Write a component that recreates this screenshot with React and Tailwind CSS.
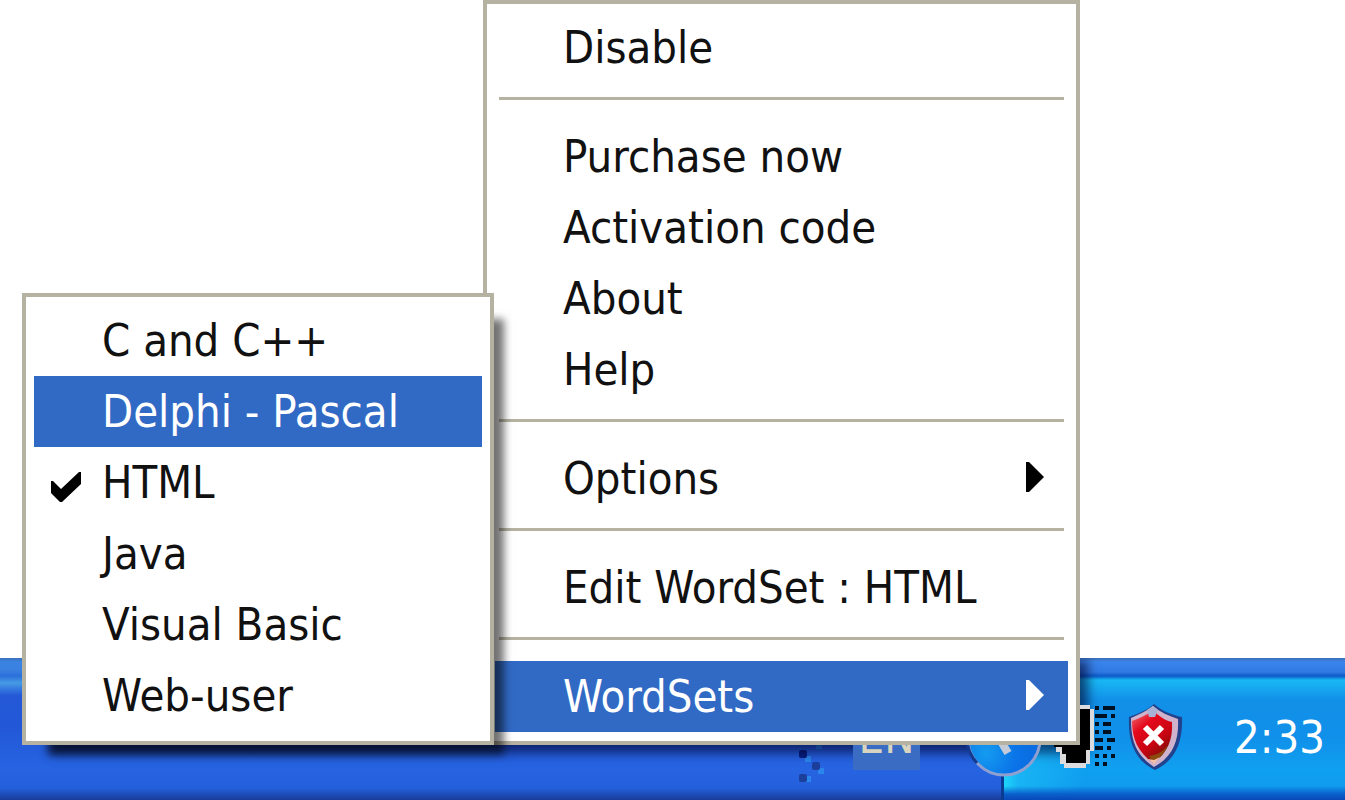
import React from "react";

const wordSets = [
  { label: "C and C++" },
  { label: "Delphi - Pascal", active: true },
  { label: "HTML", checked: true },
  { label: "Java" },
  { label: "Visual Basic" },
  { label: "Web-user" },
];

const menuGroups = [
  [{ label: "Disable" }],
  [
    { label: "Purchase now" },
    { label: "Activation code" },
    { label: "About" },
    { label: "Help" },
  ],
  [{ label: "Options", submenu: true }],
  [{ label: "Edit WordSet : HTML" }],
  [{ label: "WordSets", submenu: true, active: true }],
];

// One string per row of the signal icon, "#" is a lit pixel
const signalRows = ["#.###", "###.#", "#.##.", "#.##.", "##.##", "##.#.", "#.#.#", "#.#.."];

function CheckMark() {
  return (
    <svg viewBox="0 0 32 32" className="w-8 h-8 mt-2 mr-1 shrink-0 text-black" fill="currentColor">
      <path d="M1 10h2l8 8L29 1h2v12L12 31h-2L1 22z" />
    </svg>
  );
}

function MenuItem({ item }) {
  return (
    <button
      type="button"
      role={item.checked ? "menuitemcheckbox" : "menuitem"}
      aria-checked={item.checked}
      aria-haspopup={item.submenu ? "menu" : undefined}
      className={`flex items-center w-full h-[71px] pr-6 text-left whitespace-nowrap ${
        item.active ? "bg-[#316ac5] text-white" : "text-[#111]"
      }`}
    >
      <span className="flex justify-center w-17 shrink-0">
        {item.checked && <CheckMark />}
      </span>
      <span className="flex-1">{item.label}</span>
      {item.submenu && (
        <svg
          viewBox="0 0 18 32"
          className={`w-[18px] h-8 mb-1 ${item.active ? "text-white" : "text-black"}`}
          fill="currentColor"
        >
          <path d="M0 1h3l15 15L3 31H0z" />
        </svg>
      )}
    </button>
  );
}

/* -------------------------------------------
    TRAY ICONS
-------------------------------------------- */
function GripDots() {
  return (
    <svg viewBox="0 0 28 90" className="w-7 h-[90px]">
      <g fill="#2a86ec">
        <rect x="7" y="64" width="6" height="6" />
        <rect x="20" y="76" width="6" height="6" />
        <rect x="8" y="84" width="5" height="6" />
        <rect x="18" y="51" width="6" height="6" />
      </g>
      <g fill="#1c3f9c">
        <rect x="1" y="58" width="8" height="8" rx="2" fill="#081f80" />
        <rect x="14" y="70" width="8" height="8" rx="2" />
        <rect x="1" y="82" width="8" height="8" rx="2" />
      </g>
    </svg>
  );
}

function CollapseIcon() {
  return (
    <svg viewBox="0 0 76 76" className="w-[76px] h-[76px]">
      <defs>
        <radialGradient id="collapse" cx="0.25" cy="0.7" r="0.7">
          <stop offset="0" stopColor="#149cf0" />
          <stop offset="0.6" stopColor="#0a74e8" />
          <stop offset="1" stopColor="#0a6ce0" />
        </radialGradient>
      </defs>
      <circle cx="38" cy="38" r="36" fill="url(#collapse)" stroke="#8fa0d0" strokeWidth="3" />
      <path d="M1 38a37 37 0 0 0 10 24" fill="none" stroke="#123a92" strokeWidth="3" />
      <path d="M46 14L30 32l12 20" fill="none" stroke="#c4cad8" strokeWidth="8" />
    </svg>
  );
}

function SignalIcon() {
  return (
    <svg viewBox="0 0 60 64" className="relative z-10 w-[60px] h-16 overflow-visible" shapeRendering="crispEdges">
      <path d="M16 0h14v4h4v42h-4v13h-4v4H4v-4H0V47h-4V36h20z" fill="#dcdcde" />
      <path d="M20 4h10v41h-4v13H6V49H2v-7h-8v-6h26z" fill="#000" />
      {signalRows.map((row, y) =>
        row.split("").map((px, x) =>
          px === "#" ? (
            <rect
              key={`${x}-${y}`}
              x={35 + x * 4}
              y={1 + y * 8}
              width="4"
              height="4"
              fill="#001020"
            />
          ) : null
        )
      )}
    </svg>
  );
}

function ShieldIcon() {
  return (
    <svg viewBox="0 0 56 68" className="w-14 h-[68px]">
      <defs>
        <linearGradient id="shield" x1="0" y1="0" x2="0.6" y2="1">
          <stop offset="0" stopColor="#f07880" />
          <stop offset="0.35" stopColor="#e4091c" />
          <stop offset="0.7" stopColor="#c80412" />
          <stop offset="1" stopColor="#7a1008" />
        </linearGradient>
      </defs>
      <path d="M27 1C21 7 12 10 2 14c-1 24 5 43 26 53 22-10 28-31 27-53C45 12 35 8 27 1z" fill="#22428e" />
      <path d="M26 3C20 8 12 11 4 15c0 22 4 36 23 49 20-11 25-28 24-48C42 13 33 9 26 3z" fill="#cfb3cc" />
      <path d="M26 7c-6 5-13 8-21 11 0 18 6 31 21 42 15-10 20-24 19-41-8-2-13-6-19-12z" fill="url(#shield)" />
      <path d="M22 53c8-1 14-4 19-11-3 8-8 13-15 18z" fill="#8a4a10" />
      <path d="M21 56l6 1 6-3-6 7z" fill="#f4c0a8" />
      <path d="M20 7l6-4 5 4-3 7h-6z" fill="#a9b2d4" />
      <path d="M18 24l17 17M35 24L18 41" stroke="#fff" strokeWidth="6" />
    </svg>
  );
}

function Taskbar() {
  return (
    <footer className="relative z-0 flex justify-end h-[142px] overflow-hidden bg-[linear-gradient(to_bottom,#3c70b8_0px,#3a84e4_4px,#3a80e0_12px,#2c70dc_18px,#469ce4_25px,#3478e0_31px,#2458d6_38px,#2258d8_70px,#2764e2_110px,#2460dc_130px,#183c98_142px)] text-white">
      <div className="flex items-center pt-4">
        <GripDots />
        <button type="button" className="relative z-10 h-[66px] w-[67px] ml-[27px] mr-[46px] bg-[#3a6cc4] text-[#d8d4c0]">
          EN
        </button>
        <button type="button" aria-label="Hide icons" className="relative z-10 mt-1 -mr-[41px]">
          <CollapseIcon />
        </button>
      </div>

      <div className="flex items-center justify-end w-[344px] pt-4 pr-5 border-l-3 border-[#0a3c94] bg-[linear-gradient(to_bottom,#3c70b8_0px,#3a84ec_4px,#307ae4_14px,#0c5ac8_18px,transparent_22px,transparent_128px,#0a60cc_136px,#0848b8_142px),linear-gradient(to_right,#1ed4fa_0px,#18b4f4_14px,transparent_80px),linear-gradient(to_bottom,#18b8f4_22px,#16a8f0_30px,#1290e8_42px,#1090ea_80px,#10a0f0_112px,#1098ec_142px)]">
        <SignalIcon />
        <span className="ml-[7px] mr-[51px]">
          <ShieldIcon />
        </span>
        <time>2:33</time>
      </div>

      {/* shade that the open menu drops on the bar */}
      <div className="absolute left-12 right-[265px] top-0 bottom-[55px] shadow-[5px_5px_10px_3px_rgba(0,0,40,0.6)]" />
    </footer>
  );
}

function App() {
  return (
    <div className="relative flex flex-col h-screen overflow-hidden bg-white font-['DejaVu_Sans_Condensed','DejaVu_Sans',sans-serif] text-[45px] leading-none">
      <main className="flex-1" />
      <Taskbar />

      {/* Menus */}
      <div className="absolute z-10 right-[265px] bottom-[55px] flex items-end">
        <div
          role="menu"
          aria-label="WordSets"
          className="relative z-10 w-[472px] -mr-[11px] border-4 border-[#b5b2a2] bg-white px-2 pt-2 pb-[10px] shadow-[18px_18px_8px_-8px_rgba(0,0,0,0.55)]"
        >
          {wordSets.map((item) => (
            <MenuItem key={item.label} item={item} />
          ))}
        </div>

        <div role="menu" className="w-[597px] border-4 border-[#b5b2a2] bg-white px-2 pt-2 pb-[9px]">
          {menuGroups.map((group, i) => (
            <div key={i}>
              {i > 0 && <hr className="mx-1 mt-[14px] mb-[21px] border-t-3 border-[#b5b2a2]" />}
              {group.map((item) => (
                <MenuItem key={item.label} item={item} />
              ))}
            </div>
          ))}
        </div>
      </div>
    </div>
  );
}

export default App;
